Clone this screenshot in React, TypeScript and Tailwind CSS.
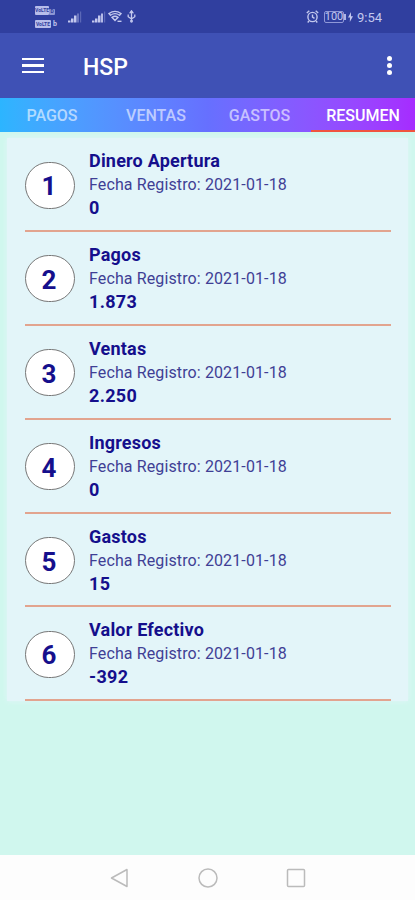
import clsx from "clsx";

const TABS = [
  { label: "PAGOS", width: "w-[104px]" },
  { label: "VENTAS", width: "w-[104px]" },
  { label: "GASTOS", width: "w-[103px]" },
  { label: "RESUMEN", width: "w-[104px]" },
];

const ENTRIES = [
  { title: "Dinero Apertura", date: "2021-01-18", value: "0" },
  { title: "Pagos", date: "2021-01-18", value: "1.873" },
  { title: "Ventas", date: "2021-01-18", value: "2.250" },
  { title: "Ingresos", date: "2021-01-18", value: "0" },
  { title: "Gastos", date: "2021-01-18", value: "15" },
  { title: "Valor Efectivo", date: "2021-01-18", value: "-392" },
];

const Signal = ({ bars }: { bars: number }) => (
  <svg width="14" height="12" viewBox="0 0 14 12" fill="#c3c8ee">
    <rect x="0" y="9.5" width="2.5" height="2" />
    <rect x="3" y="7.5" width="2.5" height="4" />
    <rect x="6" y="4.5" width="2.5" height="7" />
    <rect x="9" y="2.5" width="2" height="9" opacity={bars > 3 ? 0.9 : 0.4} />
    <rect x="12" y="0.5" width="1.2" height="11" opacity=".3" />
  </svg>
);

const StatusBar = () => (
  <div className="flex h-[33px] shrink-0 items-center bg-[#303f9f] pr-[33px] pl-[35px] text-[#c3c8ee]">
    <div className="flex w-6 flex-col gap-[5px] font-bold">
      <div className="flex h-[9px] items-end">
        <span className="h-[9px] w-[14px] overflow-hidden rounded-[1px] bg-[#b7bdea] text-center text-[5px] leading-[9px] text-[#303f9f]">
          VoLTE
        </span>
        <span className="flex h-[6px] w-[6px] items-center justify-center rounded-[1px] bg-[#b7bdea]/70 text-[5px] leading-none text-[#303f9f]">
          D
        </span>
      </div>
      <div className="flex h-[8px] items-end gap-[2px]">
        <span className="h-[8px] w-[16px] overflow-hidden rounded-[1px] bg-[#b7bdea] text-center text-[5px] leading-[8px] text-[#303f9f]">
          VoLTE
        </span>
        <span className="text-[7px] leading-[7px]">b</span>
      </div>
    </div>
    <div className="ml-[9px] flex items-center">
      <Signal bars={3} />
      <div className="ml-[10px]">
        <Signal bars={4} />
      </div>
      <svg
        className="ml-[2px]"
        width="15"
        height="13"
        viewBox="0 0 15 13"
        fill="none"
        stroke="#c3c8ee"
        strokeWidth="1.4"
      >
        <path d="M1 3.500Q7-.8 13 3.500L11.500 5.200Q7 2 2.500 5.200Z" />
        <path d="M4 7.300Q7 5.200 10 7.300L7 10.500Z" />
        <path d="M9.500 11.300h4" />
      </svg>
      <svg
        className="ml-[4px]"
        width="9"
        height="13"
        viewBox="0 0 9 13"
        fill="none"
        stroke="#c3c8ee"
        strokeWidth="1.3"
      >
        <path d="M4.500 1v10M1.200 4.500v2.200l3.300 2.300M7.800 4.500v2.200L4.500 9" />
        <path d="M3.200 2.700L4.500.8l1.300 1.900z" fill="#c3c8ee" />
        <circle cx="4.500" cy="11.300" r=".8" />
      </svg>
    </div>
    <div className="ml-auto flex items-center">
      <svg
        width="13"
        height="13"
        viewBox="0 0 13 13"
        fill="none"
        stroke="#c3c8ee"
        strokeWidth="1.4"
      >
        <circle cx="6.500" cy="7" r="4.600" />
        <path d="M6.500 4.500V7l2 1.300M.8 3L3.300.8M12.200 3L9.700.8M3 11l-1.300 1.400M10 11l1.300 1.400" />
      </svg>
      <div className="ml-[5px] flex h-[12px] w-[20px] items-center justify-center rounded-[2px] border border-[#8f98d8] text-[11px] leading-none">
        100
      </div>
      <div className="h-[6px] w-[2px] bg-[#aeb5e6]" />
      <svg className="ml-[2px]" width="5" height="10" viewBox="0 0 5 10" fill="#c3c8ee">
        <path d="M3 0L0 5.500h2L1.800 10 5 4.300H3z" />
      </svg>
      <span className="ml-[4px] w-[25px] pt-px text-[13px] leading-none whitespace-nowrap">
        9:54
      </span>
    </div>
  </div>
);

const AppBar = () => (
  <header className="flex h-[65px] shrink-0 items-center bg-[#3f51b5] pr-[23px] pl-[22px]">
    <button aria-label="Menu" className="flex flex-col gap-[4px]">
      <div className="h-[2.500px] w-[22px] bg-white" />
      <div className="h-[2.500px] w-[22px] bg-white" />
      <div className="h-[2.500px] w-[22px] bg-white" />
    </button>
    <h1 className="ml-[39px] pt-[3px] text-[23px] leading-none font-medium text-white">
      HSP
    </h1>
    <button aria-label="Más opciones" className="ml-auto flex flex-col gap-[2px]">
      <div className="size-[5px] rounded-full bg-white" />
      <div className="size-[5px] rounded-full bg-white" />
      <div className="size-[5px] rounded-full bg-white" />
    </button>
  </header>
);

export default function App() {
  return (
    <div className="flex h-[900px] w-[415px] flex-col overflow-hidden bg-[#d0f7ee] font-[Roboto,sans-serif]">
      <StatusBar />
      <AppBar />

      <nav className="flex h-[34px] shrink-0 bg-linear-to-r from-[#2cb5ff] via-[#6670ff] to-[#a62bff]">
        {TABS.map((tab) => {
          const active = tab.label === "RESUMEN";
          return (
            <div
              key={tab.label}
              className={clsx(
                "flex items-center justify-center border-b-2 pt-[4px] text-[16px] leading-none font-medium",
                tab.width,
                active ? "border-[#f0543f] text-white" : "border-transparent text-white/60",
              )}
            >
              {tab.label}
            </div>
          );
        })}
      </nav>

      <main className="mx-[7px] mt-[6px] bg-[#e3f5f9] pr-[17px] pl-[18px] shadow-[0_0_5px_#e3f5f9]">
        {ENTRIES.map((entry, i) => (
          <div
            key={entry.title}
            className="flex h-[93.900px] items-start border-b-2 border-[#e2a48f] pt-[11px]"
          >
            <div className="mt-[12.500px] flex h-[47px] w-[50px] shrink-0 items-center justify-center rounded-[24px] border border-[#777] bg-white pt-[2px] pr-[2px] text-[26px] leading-none font-bold text-[#150f8c]">
              {i + 1}
            </div>
            <div className="ml-[14px] flex flex-col whitespace-nowrap text-[#150f8c]">
              <span className="text-[18px] leading-[24px] font-bold tracking-[0.2px]">
                {entry.title}
              </span>
              <span className="text-[16px] leading-[23px] tracking-[0.12px] text-[#3f3f95]">
                Fecha Registro: {entry.date}
              </span>
              <span className="text-[18px] leading-[24px] font-bold tracking-[0.3px]">
                {entry.value}
              </span>
            </div>
          </div>
        ))}
      </main>

      <footer className="mt-auto flex h-[45px] shrink-0 items-center justify-center gap-[68px] bg-[#fdfdfd]">
        <svg width="20" height="20" viewBox="0 0 20 20" fill="none" stroke="#bbb" strokeWidth="1.500">
          <path d="M17 1.500v17L1.500 10z" strokeLinejoin="round" />
        </svg>
        <svg width="20" height="20" viewBox="0 0 20 20" fill="none" stroke="#bbb" strokeWidth="1.500">
          <circle cx="10" cy="10" r="9" />
        </svg>
        <svg width="20" height="20" viewBox="0 0 20 20" fill="none" stroke="#bbb" strokeWidth="1.500">
          <rect x="1.500" y="1.500" width="17" height="17" rx="1" />
        </svg>
      </footer>
    </div>
  );
}
